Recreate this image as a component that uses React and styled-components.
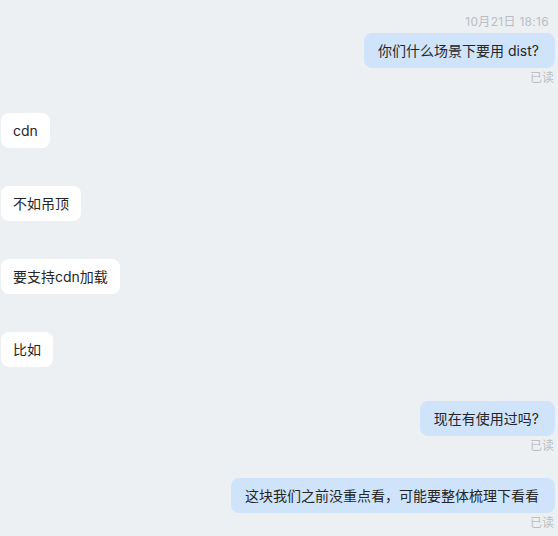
import React from 'react'
import styled, { createGlobalStyle } from 'styled-components'

const GlobalStyle = createGlobalStyle`
  html, body {
    margin: 0;
    padding: 0;
    background: #edf0f3;
  }
  body {
    font-family: Inter, "Noto Sans CJK SC", "Noto Sans", sans-serif;
    -webkit-font-smoothing: antialiased;
  }
`

const Chat = styled.div`
  display: flex;
  flex-direction: column;
  width: 558px;
  height: 536px;
  box-sizing: border-box;
  padding: 14px 3px 0 1px;
  overflow: hidden;
  background: #edf0f3;
`

const Time = styled.div`
  align-self: flex-end;
  margin-right: 6px;
  font-size: 12px;
  letter-spacing: 0.3px;
  line-height: 16px;
  color: #b9bdc3;
`

const Row = styled.div`
  display: flex;
  flex-direction: column;
  align-items: ${p => (p.$mine ? 'flex-end' : 'flex-start')};
  margin-top: ${p => p.$gap}px;
`

const Bubble = styled.div`
  box-sizing: border-box;
  height: 35px;
  padding: ${p => (p.$mine ? '0 16px 0 14px' : '0 12px')};
  font-size: 14px;
  line-height: 35px;
  color: #262626;
  white-space: nowrap;
  border-radius: 8px;
  background: ${p => (p.$mine ? '#cfe4fb' : '#ffffff')};
`

const Read = styled.div`
  margin-top: 2px;
  margin-right: 1px;
  font-size: 12px;
  line-height: 16px;
  color: #bbbec2;
`

const messages = [
  { id: 1, mine: true, text: '你们什么场景下要用 dist?', gap: 3 },
  { id: 2, mine: false, text: 'cdn', gap: 27 },
  { id: 3, mine: false, text: '不如吊顶', gap: 38 },
  { id: 4, mine: false, text: '要支持cdn加载', gap: 38 },
  { id: 5, mine: false, text: '比如', gap: 38 },
  { id: 6, mine: true, text: '现在有使用过吗?', gap: 34 },
  { id: 7, mine: true, text: '这块我们之前没重点看，可能要整体梳理下看看', gap: 24 },
]

function App() {
  return (
    <>
      <GlobalStyle />
      <Chat>
        <Time>10月21日 18:16</Time>
        {messages.map(({ id, mine, text, gap }) => (
          <Row key={id} $mine={mine} $gap={gap}>
            <Bubble $mine={mine}>{text}</Bubble>
            {mine && <Read>已读</Read>}
          </Row>
        ))}
      </Chat>
    </>
  )
}

export default App
